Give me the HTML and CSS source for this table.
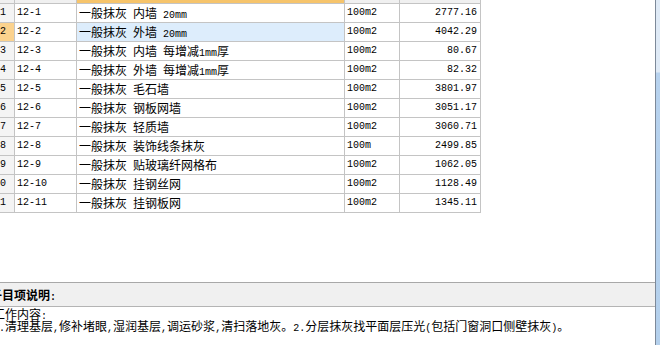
FILE: index.html
```html
<!DOCTYPE html>
<html lang="zh-CN">
<head>
<meta charset="utf-8">
<title>定额列表</title>
<link rel="stylesheet" href="styles.css">
</head>
<body>
<div class="window">
  <div class="content">
    <div class="grid">
      <div class="row head">
        <div class="cell c1"></div>
        <div class="cell c2"></div>
        <div class="cell c3 sel"></div>
        <div class="cell c4"></div>
        <div class="cell c5"></div>
      </div>
      <div class="row">
        <div class="cell c1 rn">1</div><div class="cell c2">12-1</div>
        <div class="cell c3"><span class="zh">一般抹灰</span> <span class="zh">内墙</span> 20mm</div>
        <div class="cell c4">100m2</div><div class="cell c5">2777.16</div>
      </div>
      <div class="row cur">
        <div class="cell c1 rn">2</div><div class="cell c2">12-2</div>
        <div class="cell c3"><span class="zh">一般抹灰</span> <span class="zh">外墙</span> 20mm</div>
        <div class="cell c4">100m2</div><div class="cell c5">4042.29</div>
      </div>
      <div class="row">
        <div class="cell c1 rn">3</div><div class="cell c2">12-3</div>
        <div class="cell c3"><span class="zh">一般抹灰</span> <span class="zh">内墙</span> <span class="zh">每增减</span>1mm<span class="zh">厚</span></div>
        <div class="cell c4">100m2</div><div class="cell c5">80.67</div>
      </div>
      <div class="row">
        <div class="cell c1 rn">4</div><div class="cell c2">12-4</div>
        <div class="cell c3"><span class="zh">一般抹灰</span> <span class="zh">外墙</span> <span class="zh">每增减</span>1mm<span class="zh">厚</span></div>
        <div class="cell c4">100m2</div><div class="cell c5">82.32</div>
      </div>
      <div class="row">
        <div class="cell c1 rn">5</div><div class="cell c2">12-5</div>
        <div class="cell c3"><span class="zh">一般抹灰</span> <span class="zh">毛石墙</span></div>
        <div class="cell c4">100m2</div><div class="cell c5">3801.97</div>
      </div>
      <div class="row">
        <div class="cell c1 rn">6</div><div class="cell c2">12-6</div>
        <div class="cell c3"><span class="zh">一般抹灰</span> <span class="zh">钢板网墙</span></div>
        <div class="cell c4">100m2</div><div class="cell c5">3051.17</div>
      </div>
      <div class="row">
        <div class="cell c1 rn">7</div><div class="cell c2">12-7</div>
        <div class="cell c3"><span class="zh">一般抹灰</span> <span class="zh">轻质墙</span></div>
        <div class="cell c4">100m2</div><div class="cell c5">3060.71</div>
      </div>
      <div class="row">
        <div class="cell c1 rn">8</div><div class="cell c2">12-8</div>
        <div class="cell c3"><span class="zh">一般抹灰</span> <span class="zh">装饰线条抹灰</span></div>
        <div class="cell c4">100m</div><div class="cell c5">2499.85</div>
      </div>
      <div class="row">
        <div class="cell c1 rn">9</div><div class="cell c2">12-9</div>
        <div class="cell c3"><span class="zh">一般抹灰</span> <span class="zh">贴玻璃纤网格布</span></div>
        <div class="cell c4">100m2</div><div class="cell c5">1062.05</div>
      </div>
      <div class="row">
        <div class="cell c1 rn">10</div><div class="cell c2">12-10</div>
        <div class="cell c3"><span class="zh">一般抹灰</span> <span class="zh">挂钢丝网</span></div>
        <div class="cell c4">100m2</div><div class="cell c5">1128.49</div>
      </div>
      <div class="row">
        <div class="cell c1 rn">11</div><div class="cell c2">12-11</div>
        <div class="cell c3"><span class="zh">一般抹灰</span> <span class="zh">挂钢板网</span></div>
        <div class="cell c4">100m2</div><div class="cell c5">1345.11</div>
      </div>
    </div>
    <div class="desc-head"><span class="zh">子目项说明</span>:</div>
    <div class="desc-body">
      <div class="line"><span class="zh">工作内容</span>:</div>
      <div class="line">1.<span class="zh">清理基层</span>,<span class="zh">修补堵眼</span>,<span class="zh">湿润基层</span>,<span class="zh">调运砂浆</span>,<span class="zh">清扫落地灰。</span>2.<span class="zh">分层抹灰找平面层压光</span>(<span class="zh">包括门窗洞口侧壁抹灰</span>)<span class="zh">。</span></div>
    </div>
  </div>
  <div class="edge"></div>
</div>
</body>
</html>
```
FILE: styles.css
```css
html, body {
  margin: 0;
  padding: 0;
  background: #ffffff;
}
body {
  width: 660px;
  height: 345px;
  overflow: hidden;
  font-family: "Liberation Mono", "DejaVu Sans Mono", monospace;
  font-size: 10px;
  color: #000000;
}
.zh {
  font-family: "Noto Sans CJK SC", sans-serif;
  font-size: 12px;
}
.window {
  display: flex;
  height: 345px;
}
.content {
  width: 655px;
  display: flex;
  flex-direction: column;
}
.edge {
  width: 4px;
  border-left: 1px solid #7d8999;
  background: linear-gradient(to bottom, #dfeaf6 0, #dfeaf6 72px, #b7d2ee 73px, #b4d0ec 100%);
}
.grid {
  height: 282px;
  display: flex;
  flex-direction: column;
}
.row {
  display: flex;
  height: 19px;
}
.row.head {
  height: 4px;
}
.cell {
  box-sizing: border-box;
  height: 100%;
  border-right: 1px solid #c4c4c4;
  border-bottom: 1px solid #c4c4c4;
  line-height: 18px;
  white-space: nowrap;
  overflow: hidden;
  padding-left: 2px;
}
.head .cell {
  background: #f0f0f0;
}
.head .cell.sel {
  background: #f6c46b;
}
.c1 { width: 15px; }
.c2 { width: 62px; }
.c3 { width: 268px; }
.c4 { width: 55px; }
.c5 { width: 81px; text-align: right; padding-left: 0; padding-right: 3px; }
.rn {
  display: flex;
  justify-content: flex-end;
  padding-left: 0;
  padding-right: 8px;
  background: #f4f4f4;
}
.cur .rn {
  background: #fbd28d;
}
.cur .c3 {
  background: #ddedfc;
}
.desc-head {
  box-sizing: border-box;
  height: 25px;
  border-top: 1px solid #a8a8a8;
  border-bottom: 1px solid #b4b4b4;
  background: #f0f0f0;
  line-height: 23px;
  padding-left: 0;
  margin-left: -10px;
  font-weight: bold;
  white-space: nowrap;
}
.desc-body {
  padding-top: 1px;
  margin-left: -7px;
}
.line {
  height: 12px;
  line-height: 12px;
  white-space: nowrap;
}
```
